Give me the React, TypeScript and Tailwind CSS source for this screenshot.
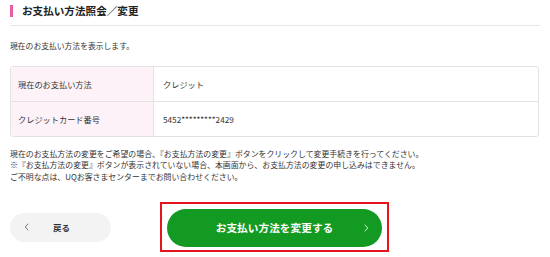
import React from "react";

const font = { fontFamily: '"Noto Sans CJK JP", "Noto Sans", sans-serif' };

function Chevron({ dir, color }: { dir: "left" | "right"; color: string }) {
  return (
    <svg width="5" height="8" viewBox="0 0 5 8" fill="none">
      {dir === "left" ? (
        <path d="M4 1 L1.2 4 L4 7" stroke={color} strokeWidth="1" strokeLinecap="round" strokeLinejoin="round" />
      ) : (
        <path d="M1 1 L3.8 4 L1 7" stroke={color} strokeWidth="1" strokeLinecap="round" strokeLinejoin="round" />
      )}
    </svg>
  );
}

export default function App() {
  return (
    <div className="w-[550px] h-[257px] bg-white text-[#333333] px-[10px]" style={font}>
      <div className="flex items-center h-[26px] border-b border-[#e6e6e6] pb-[3px] pr-[1px]">
        <div className="w-[3px] h-[12px] bg-[#ee5ca0] mr-[9px]" />
        <h1 className="text-[10.6px] font-bold leading-none text-[#222222]">お支払い方法照会／変更</h1>
      </div>
      <p className="text-[7.8px] leading-none mt-[16px]">現在のお支払い方法を表示します。</p>
      <div className="mt-[16px] mr-[1px] border border-[#e3e3e3] rounded-[3px] overflow-hidden text-[8.2px]">
        <div className="flex h-[35px] border-b border-[#e3e3e3]">
          <div className="w-[143px] bg-[#fdf2f7] border-r border-[#e3e3e3] flex items-center pl-[7px]">現在のお支払い方法</div>
          <div className="flex-1 flex items-center pl-[9px]">クレジット</div>
        </div>
        <div className="flex h-[34px]">
          <div className="w-[143px] bg-[#fdf2f7] border-r border-[#e3e3e3] flex items-center pl-[7px]">クレジットカード番号</div>
          <div className="flex-1 flex items-center pl-[9px]">5452*********2429</div>
        </div>
      </div>
      <div className="mt-[11px] text-[7.9px] leading-[11.5px]">
        <p>現在のお支払方法の変更をご希望の場合、『お支払方法の変更』ボタンをクリックして変更手続きを行ってください。</p>
        <p>※『お支払方法の変更』ボタンが表示されていない場合、本画面から、お支払方法の変更の申し込みはできません。</p>
        <p>ご不明な点は、UQお客さまセンターまでお問い合わせください。</p>
      </div>
      <div className="flex items-center mt-[20px]">
        <button className="w-[101px] h-[29px] rounded-full bg-[#f3f3f3] flex items-center pl-[14px] text-[8.5px] font-bold text-[#333333]" style={font}>
          <Chevron dir="left" color="#777777" />
          <span className="ml-[24px]">戻る</span>
        </button>
        <div className="ml-[49px] border-2 border-[#e8141c] p-[5px] pb-[3px]">
          <button className="w-[215px] h-[38px] rounded-full bg-[#139a22] flex items-center justify-center relative text-white text-[10.7px] font-bold" style={font}>
            <span>お支払い方法を変更する</span>
            <span className="absolute right-[13px] top-1/2 -translate-y-1/2 flex">
              <Chevron dir="right" color="#cfe9d1" />
            </span>
          </button>
        </div>
      </div>
    </div>
  );
}
